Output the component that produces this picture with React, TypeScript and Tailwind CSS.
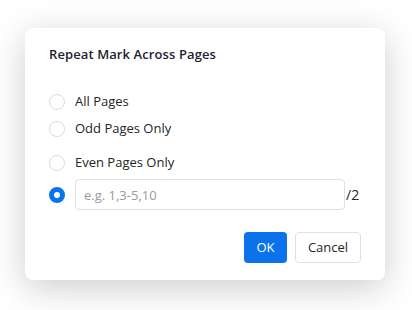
import React, { useState } from 'react';

const options = [
  { id: 'all', label: 'All Pages' },
  { id: 'odd', label: 'Odd Pages Only' },
  { id: 'even', label: 'Even Pages Only' },
];

const Radio: React.FC<{ checked: boolean }> = ({ checked }) =>
  checked ? (
    <span className="w-4 h-4 rounded-full border-[5px] border-[#0a73eb] bg-white flex-shrink-0" />
  ) : (
    <span className="w-4 h-4 rounded-full border border-[#dcdcdc] bg-white flex-shrink-0" />
  );

export default function App() {
  const [mode, setMode] = useState('custom');
  const [range, setRange] = useState('');

  return (
    <div
      className="w-[412px] h-[310px] bg-white pt-[28px] pl-[25px]"
      style={{ fontFamily: '"Open Sans", "Noto Sans", sans-serif' }}
    >
      <div className="w-[360px] h-[252px] bg-white rounded-lg shadow-[0_8px_36px_rgba(0,0,0,0.2)] pt-[17px] px-6 flex flex-col">
        <h2 className="text-[13px] font-semibold text-[#1f2430] leading-[18px] tracking-[0.1px]">Repeat Mark Across Pages</h2>

        <div className="mt-[29px] flex flex-col text-[13px] text-[#262626]">
          {options.map((o, i) => (
            <label
              key={o.id}
              onClick={() => setMode(o.id)}
              className={`flex items-center gap-[10px] h-[20px] cursor-pointer ${i === 1 ? 'mt-[7px]' : ''} ${i === 2 ? 'mt-[14px]' : ''}`}
            >
              <Radio checked={mode === o.id} />
              <span>{o.label}</span>
            </label>
          ))}

          <div className="flex items-center mt-[6px]" onClick={() => setMode('custom')}>
            <Radio checked={mode === 'custom'} />
            <input
              value={range}
              onChange={(e) => setRange(e.target.value)}
              placeholder="e.g. 1,3-5,10"
              className="ml-[10px] w-[270px] h-[31px] border border-[#e0e0e0] rounded px-[8px] text-[13px] text-[#262626] placeholder:text-[#9a9a9a] outline-none"
            />
            <span className="ml-[1px] text-[14px] text-[#262626]">/2</span>
          </div>
        </div>

        <div className="mt-auto mb-[17px] flex justify-end gap-2">
          <button className="h-[31px] w-[43px] rounded bg-[#0a73eb] text-white text-[13px]">OK</button>
          <button className="h-[31px] w-[66px] rounded border border-[#e0e0e0] bg-white text-[#262626] text-[13px]">Cancel</button>
        </div>
      </div>
    </div>
  );
}
